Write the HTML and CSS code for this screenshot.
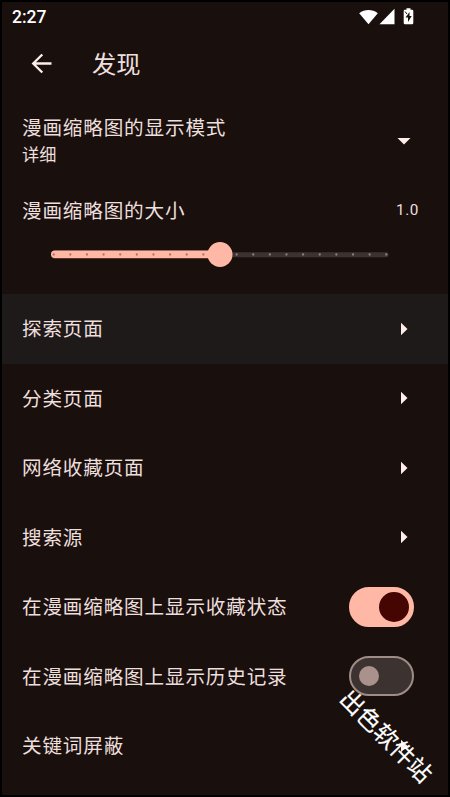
FILE: index.html
```
<!DOCTYPE html>
<html lang="zh-CN">
<head>
<meta charset="utf-8">
<title>发现</title>
<link rel="stylesheet" href="styles.css">
</head>
<body>
<div class="screen">
  <div class="status">
    <span class="clock">2:27</span>
    <svg class="status-icons" width="56" height="20" viewBox="0 0 56 20" fill="#fff">
      <path d="M.2 5.2C5.4.9 13.600.9 18.800 5.200L9.500 16.300Z"/>
      <path d="M35.500.8V16.300H20.500Z"/>
      <path d="M47.500.2H51.500V1.700H53Q54.300 1.700 54.300 3V15Q54.300 16.300 53 16.300H46Q44.700 16.300 44.700 15V3Q44.700 1.700 46 1.700H47.500Z"/>
      <path d="M50.500 4L46.500 9.600H49V14L52.700 8H50.500Z" fill="#19100e"/>
      <path d="M46 3.500L48 6" stroke="#19100e"/>
    </svg>
  </div>
  <header class="bar">
    <svg class="back" width="22" height="22" viewBox="0 0 22 22" fill="none" stroke="#ffede9" stroke-width="2.300"><path d="M21.500 10.500H3M12.300 1.500L3.200 10.500L12.300 19.500"/></svg>
    <h1>发现</h1>
  </header>
  <div class="row mode">
    <div><div class="label">漫画缩略图的显示模式</div><div class="sub">详细</div></div>
    <svg class="arrow" width="14" height="14" viewBox="0 0 14 14"><path d="M.5 4H13.500L7 10.500Z"/></svg>
  </div>
  <div class="row size"><div class="label">漫画缩略图的大小</div><span class="value">1.0</span></div>
  <div class="slider">
    <svg width="350" height="30" viewBox="0 0 350 30">
      <rect x="169" y="12.200" width="169.500" height="5" rx="2" fill="#3c3230"/>
      <rect x="1" y="10.800" width="180" height="8" rx="4" fill="#75402f"/>
      <rect x="1" y="10.500" width="180" height="7.500" rx="3.750" fill="#ffb8a5"/>
      <path d="M3.700 14.500H160" stroke="#b77261" stroke-width="2.300" stroke-linecap="round" stroke-dasharray="0 16.630"/>
      <path d="M186.600 14.500H337" stroke="#8d807c" stroke-width="2.300" stroke-linecap="round" stroke-dasharray="0 16.630"/>
      <circle cx="170" cy="14.500" r="12.500" fill="#ffb8a5"/>
    </svg>
  </div>
  <div class="row item active"><div class="label">探索页面</div><svg class="arrow" width="14" height="14" viewBox="0 0 14 14"><path d="M4 .8L10.500 7L4 13.200Z"/></svg></div>
  <div class="row item"><div class="label">分类页面</div><svg class="arrow" width="14" height="14" viewBox="0 0 14 14"><path d="M4 .8L10.500 7L4 13.200Z"/></svg></div>
  <div class="row item"><div class="label">网络收藏页面</div><svg class="arrow" width="14" height="14" viewBox="0 0 14 14"><path d="M4 .8L10.500 7L4 13.200Z"/></svg></div>
  <div class="row item"><div class="label">搜索源</div><svg class="arrow" width="14" height="14" viewBox="0 0 14 14"><path d="M4 .8L10.500 7L4 13.200Z"/></svg></div>
  <div class="row item"><div class="label">在漫画缩略图上显示收藏状态</div><span class="switch on"></span></div>
  <div class="row item"><div class="label">在漫画缩略图上显示历史记录</div><span class="switch"></span></div>
  <div class="row item"><div class="label">关键词屏蔽</div><svg class="arrow" width="14" height="14" viewBox="0 0 14 14"><path d="M4 .8L10.500 7L4 13.200Z"/></svg></div>
  <div class="watermark">出色软件站</div>
</div>
</body>
</html>
```
FILE: styles.css
```
* { box-sizing: border-box; }
body { margin: 0; background: #000; }
.screen {
  position: relative;
  width: 450px;
  height: 797px;
  overflow: hidden;
  border: 2px solid #000;
  background: #19100e;
  color: #eddfdc;
  font-family: Roboto, "Noto Sans CJK SC", sans-serif;
}
.status {
  display: flex;
  justify-content: space-between;
  height: 30px;
  padding: 6px 33px 0 10px;
}
.clock { font-size: 17.5px; font-weight: 500; line-height: 19px; color: #fff; }
.status-icons { display: block; }
.bar { display: flex; align-items: center; height: 64px; padding-left: 28px; }
.bar h1 {
  margin: 0 0 0 40px;
  padding-top: 2px;
  font-size: 24.3px;
  line-height: 36px;
  font-weight: 400;
}
.row { display: flex; align-items: center; justify-content: space-between; padding: 0 34px 0 20px; }
.label { padding-top: 3px; font-size: 19.6px; line-height: 28px; letter-spacing: 0.83px; white-space: nowrap; }
.sub { font-size: 17.2px; line-height: 25px; }
.mode { height: 90px; }
.mode .label { padding-top: 1px; }
.size { height: 48px; padding-right: 29px; }
.value { font-size: 15.3px; letter-spacing: 0.6px; }
.arrow { display: block; margin-right: 3px; fill: #ffede9; }
.slider { height: 60px; padding: 6px 0 0 48px; }
.slider svg { display: block; }
.item { height: 69.5px; }
.active { background: #1f1a1a; }
.switch {
  display: flex;
  align-items: center;
  width: 65px;
  height: 40px;
  padding-left: 7.5px;
  border: 2.5px solid #a08c87;
  border-radius: 20px;
  background: #3c3331;
}
.switch::before { content: ""; width: 20px; height: 20px; border-radius: 50%; background: #a9918c; }
.switch.on { border-color: #ffb8a5; background: #ffb8a5; padding-left: 27.5px; }
.switch.on::before { width: 30px; height: 30px; background: #450500; }
.watermark {
  position: absolute;
  left: 323.5px;
  top: 717px;
  width: 120px;
  font-size: 23.8px;
  line-height: 36px;
  color: #fff;
  -webkit-text-stroke: 0.15px #fff;
  white-space: nowrap;
  transform: rotate(45deg);
}
```
